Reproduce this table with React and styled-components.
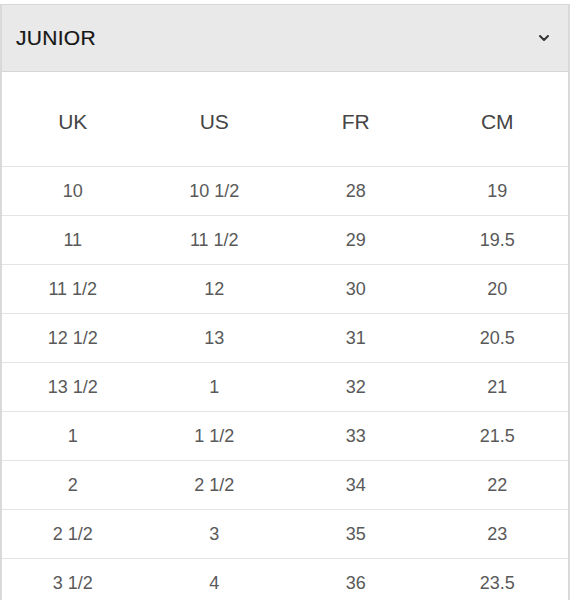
import React from 'react';
import styled, { createGlobalStyle } from 'styled-components';

const GlobalStyle = createGlobalStyle`
	body {
		margin: 0;
		background: #ffffff;
		font-family: 'Liberation Sans', Arial, sans-serif;
	}
`;

const columns = ['UK', 'US', 'FR', 'CM'];

const sizes = [
	['10', '10 1/2', '28', '19'],
	['11', '11 1/2', '29', '19.5'],
	['11 1/2', '12', '30', '20'],
	['12 1/2', '13', '31', '20.5'],
	['13 1/2', '1', '32', '21'],
	['1', '1 1/2', '33', '21.5'],
	['2', '2 1/2', '34', '22'],
	['2 1/2', '3', '35', '23'],
	['3 1/2', '4', '36', '23.5'],
];

export default function App() {
	return (
		<>
			<GlobalStyle />
			<Page>
				<Panel>
					<Header>
						<Title>JUNIOR</Title>
						<Chevron viewBox="0 0 12 8">
							<path d="M2 2 L6 6 L10 2" />
						</Chevron>
					</Header>
					<Table>
						<HeadRow>
							{columns.map(c => (
								<HeadCell key={c}>{c}</HeadCell>
							))}
						</HeadRow>
						{sizes.map((row, i) => (
							<Row key={i}>
								{row.map((v, j) => (
									<Cell key={j}>{v}</Cell>
								))}
							</Row>
						))}
					</Table>
				</Panel>
			</Page>
		</>
	);
}

const Page = styled.div`
	padding-top: 4px;
	width: 570px;
`;

const Panel = styled.section`
	border: 1px solid #d6d6d6;
	border-left: 2px solid #d9d9d9;
	border-right: 2px solid #d9d9d9;
	background: #fff;
`;

const Header = styled.div`
	height: 66px;
	background-color: #e9e9e9;
	border-bottom: 1px solid #d6d6d6;
	display: flex;
	align-items: center;
	justify-content: space-between;
	padding: 0 18px 0 14px;
`;

const Title = styled.h2`
	margin: 0;
	font-size: 21px;
	font-weight: normal;
	color: #161616;
	letter-spacing: 0.3px;
	-webkit-text-stroke: 0.2px #161616;
`;

const Chevron = styled.svg`
	width: 12px;
	height: 8px;
	fill: none;
	stroke: #333;
	stroke-width: 2;
	stroke-linecap: round;
	stroke-linejoin: round;
`;

const Table = styled.div`
	display: flex;
	flex-direction: column;
`;

const HeadRow = styled.div`
	display: grid;
	grid-template-columns: repeat(4, 1fr);
	height: 94px;
	align-items: center;
	border-bottom: 1px solid #e4e4e4;
`;

const HeadCell = styled.div`
	text-align: center;
	font-size: 21px;
	color: #454545;
	padding-top: 6px;
`;

const Row = styled.div`
	display: grid;
	grid-template-columns: repeat(4, 1fr);
	height: 48px;
	align-items: center;
	border-bottom: 1px solid #e4e4e4;
`;

const Cell = styled.div`
	text-align: center;
	font-size: 18px;
	color: #595959;
	padding-top: 1px;
`;
